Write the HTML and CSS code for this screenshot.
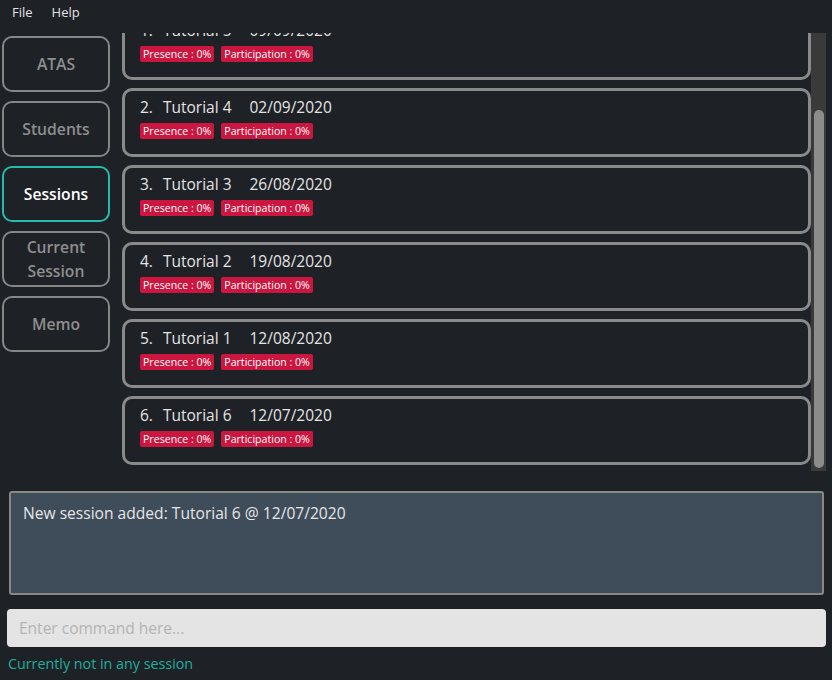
FILE: index.html
```html
<!DOCTYPE html>
<html>
<head>
<meta charset="utf-8">
<link rel="stylesheet" href="styles.css">
</head>
<body>
<div class="menubar">
  <span class="menu-item">File</span>
  <span class="menu-item">Help</span>
</div>
<div class="main">
  <div class="sidebar">
    <div class="nav-btn">ATAS</div>
    <div class="nav-btn">Students</div>
    <div class="nav-btn active">Sessions</div>
    <div class="nav-btn">Current<br>Session</div>
    <div class="nav-btn">Memo</div>
  </div>
  <div class="list-area">
    <div class="viewport">
      <div class="cards">
        <div class="card">
          <div class="title"><span class="idx">1.</span><span class="name">Tutorial 5</span><span class="date">09/09/2020</span></div>
          <div class="badges"><span class="badge">Presence : 0%</span><span class="badge">Participation : 0%</span></div>
        </div>
        <div class="card">
          <div class="title"><span class="idx">2.</span><span class="name">Tutorial 4</span><span class="date">02/09/2020</span></div>
          <div class="badges"><span class="badge">Presence : 0%</span><span class="badge">Participation : 0%</span></div>
        </div>
        <div class="card">
          <div class="title"><span class="idx">3.</span><span class="name">Tutorial 3</span><span class="date">26/08/2020</span></div>
          <div class="badges"><span class="badge">Presence : 0%</span><span class="badge">Participation : 0%</span></div>
        </div>
        <div class="card">
          <div class="title"><span class="idx">4.</span><span class="name">Tutorial 2</span><span class="date">19/08/2020</span></div>
          <div class="badges"><span class="badge">Presence : 0%</span><span class="badge">Participation : 0%</span></div>
        </div>
        <div class="card">
          <div class="title"><span class="idx">5.</span><span class="name">Tutorial 1</span><span class="date">12/08/2020</span></div>
          <div class="badges"><span class="badge">Presence : 0%</span><span class="badge">Participation : 0%</span></div>
        </div>
        <div class="card">
          <div class="title"><span class="idx">6.</span><span class="name">Tutorial 6</span><span class="date">12/07/2020</span></div>
          <div class="badges"><span class="badge">Presence : 0%</span><span class="badge">Participation : 0%</span></div>
        </div>
      </div>
    </div>
    <div class="scrollbar"><div class="thumb"></div></div>
  </div>
</div>
<div class="result">New session added: Tutorial 6 @ 12/07/2020</div>
<div class="command">Enter command here...</div>
<div class="status">Currently not in any session</div>
</body>
</html>
```

FILE: styles.css
```css
html, body {
  margin: 0;
  padding: 0;
  background: #1e2126;
  font-family: "Open Sans", "Noto Sans", sans-serif;
  width: 832px;
  height: 680px;
  overflow: hidden;
}

.menubar {
  height: 24px;
  display: flex;
  align-items: center;
  gap: 19px;
  padding-left: 12px;
  font-size: 13px;
  color: #e2e2e2;
}

.main {
  display: flex;
  padding-top: 9px;
  height: 438px;
}

.sidebar {
  margin-left: 2px;
  margin-top: 3px;
  width: 108px;
  display: flex;
  flex-direction: column;
  gap: 9px;
}

.nav-btn {
  box-sizing: border-box;
  height: 56px;
  border: 2px solid #868686;
  border-radius: 10px;
  display: flex;
  align-items: center;
  justify-content: center;
  text-align: center;
  color: #8e8e8e;
  font-weight: 600;
  font-size: 15.7px;
  line-height: 24px;
}

.nav-btn.active {
  border-color: #25bcae;
  color: #ffffff;
}

.list-area {
  margin-left: 12px;
  display: flex;
  height: 438px;
}

.viewport {
  width: 689px;
  height: 438px;
  overflow: hidden;
}

.cards {
  margin-top: -22px;
  display: flex;
  flex-direction: column;
  gap: 8px;
}

.card {
  box-sizing: border-box;
  height: 69px;
  border: 3px solid #8a8a8a;
  border-radius: 10px;
  padding: 6px 15px 0 15px;
}

.title {
  font-size: 15.5px;
  line-height: 20px;
  color: #e4e4e4;
  font-weight: 500;
}

.idx {
  margin-right: 10px;
}

.name {
  margin-right: 18px;
}

.badges {
  margin-top: 6px;
  display: flex;
  gap: 7px;
}

.badge {
  background: #cb163f;
  color: #ffffff;
  font-size: 10.6px;
  line-height: 16px;
  height: 16px;
  padding: 0 3px;
  border-radius: 2px;
}

.scrollbar {
  width: 15px;
  height: 438px;
  background: #3a3a3a;
}

.thumb {
  margin-top: 77px;
  margin-left: 3px;
  width: 10px;
  height: 358px;
  border-radius: 5px;
  background: #8c8c8c;
}

.result {
  box-sizing: border-box;
  margin: 20px 0 0 9px;
  width: 815px;
  height: 104px;
  background: #3f4c59;
  border: 2px solid #888888;
  border-radius: 3px;
  padding: 9px 12px;
  color: #e6e6e6;
  font-size: 15.6px;
  line-height: 22px;
}

.command {
  box-sizing: border-box;
  margin: 14px 0 0 7px;
  width: 819px;
  height: 38px;
  background: #e4e4e4;
  border-radius: 4px;
  padding-left: 12px;
  display: flex;
  align-items: center;
  color: #b4b4b4;
  font-size: 15.5px;
}

.status {
  margin: 7px 0 0 8px;
  color: #1fae9c;
  font-size: 14.3px;
  line-height: 20px;
}
```
